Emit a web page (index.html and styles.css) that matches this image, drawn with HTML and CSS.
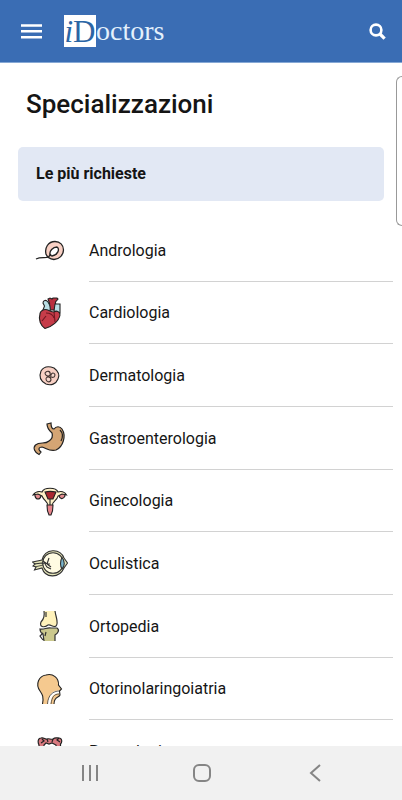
FILE: index.html
```html
<!DOCTYPE html>
<html lang="it">

<head>
  <meta charset="UTF-8" />
  <meta name="viewport" content="width=device-width, initial-scale=1.0" />
  <title>iDoctors - Specializzazioni</title>
  <link rel="stylesheet" href="styles.css">
</head>

<body>
  <header class="topbar">
    <button class="icon-btn" aria-label="Menu">
      <svg width="21" height="15" viewBox="0 0 21 15" fill="#fff">
        <path d="M0 0.3h21v2.4H0zM0 6.1h21v2.4H0zM0 12h21v2.4H0z" />
      </svg>
    </button>
    <a class="logo" href="#"><span class="logo-box"><i>i</i><span>D</span></span><span class="logo-rest">octors</span></a>
    <button class="icon-btn search" aria-label="Cerca">
      <svg width="17" height="17" viewBox="0 0 17 17" fill="none" stroke="#fff">
        <circle cx="7" cy="7" r="5.4" stroke-width="2.6" />
        <path d="M11 11l4.6 4.6" stroke-width="3.2" />
      </svg>
    </button>
  </header>

  <main>
    <h1>Specializzazioni</h1>
    <h2>Le più richieste</h2>

    <ul class="list">
      <li>
        <svg class="icon" viewBox="0 0 36 36" stroke="#222" stroke-width="1.3" fill="none">
          <path d="M23 8.500C28 8.500 31.500 12 31.500 17C31.500 22 27 26.500 22 26.500C18 26 15 24 14 21C12.500 15 16 8.500 23 8.500Z" fill="#f8d0c4" />
          <path d="M18 22C17 18 21 14 25 14C28 16 26 22 20 23Z" fill="#fff" />
          <path d="M19 21L16.500 24C13 25.500 9 23.500 4 26" />
        </svg>
        <a href="#">Andrologia</a>
      </li>
      <li>
        <svg class="icon" viewBox="0 0 36 36" stroke="#222" stroke-width="1.1" fill="none">
          <path d="M18 15L17.500 8L16 4L18 3L20 4L21 3L25 3L26 4L23.500 7L24 15Z" fill="#b9303f" />
          <path d="M11 15L12.500 11L11 8C11 5 14 4.500 16 7C18 10 19 12 18 17L13 18ZM22 16L23 9H28V18Z" fill="#b9dfe5" />
          <path d="M11 15C15 13 18 17 22 17C25 15 28 17 28 20C27 26 20 32 13 33.500C9 31 6 25 8 19C8 17 9 16 11 15Z" fill="#c63c49" />
          <path d="M14 18C18 18 21 20 22 23M10 26L14 21M22 17L23 27" stroke="#6f1721" />
        </svg>
        <a href="#">Cardiologia</a>
      </li>
      <li>
        <svg class="icon" viewBox="0 0 36 36" stroke="#222" stroke-width="1.1" fill="none">
          <path d="M9 13C12 8 17 8 22 10C26 13 28 17 26 21C24 26 19 28 14 26C8 23 7 18 9 13Z" fill="#f8d0c4" />
          <g fill="#f6d8ce" stroke="#443532">
            <path d="M13 15C15 12 19 13 18 17C17 19 13 18 13 15ZM19 17C20 13 25 16 22 19C20 20 18 19 19 17ZM14 21C14 18 19 18 19 22C18 25 14 24 14 21Z" />
          </g>
        </svg>
        <a href="#">Dermatologia</a>
      </li>
      <li>
        <svg class="icon" viewBox="0 0 36 36" stroke="#222" stroke-width="1.2" fill="none">
          <path d="M15 3L19 2C19 5 20 8 22 8C24 5 28 5 30 8C34.500 15 31 26 24 29C18 31 14 27 10 26C7 26 6 28 8 30L9 31L7 33.500C3 32 0.500 27 3.500 24C8 20 13 24 17 20C20 18 21 15 20 12C16.500 9 15 7 15 3Z" fill="#d4a574" />
          <path d="M28 9C31 12 31 16 29 20" />
        </svg>
        <a href="#">Gastroenterologia</a>
      </li>
      <li>
        <svg class="icon" viewBox="0 0 36 36" stroke="#222" stroke-width="1.1" fill="none">
          <path d="M3 13C2 9 9 10 9 13C8 17 4 17 3 13ZM27 13C28 9 33 10 33 13C31 17 28 16 27 13Z" fill="#e68d91" />
          <path d="M1 12C4 8 7 8 10 9C12 4 24 4 26 9C29 8 32 8 34.500 12L30 11L26 13C25 18 20 18 20 23H16C16 18 12 18 10 13L6 11Z" fill="#fff1c8" />
          <path d="M13 9C17 8 19 8 24 9L21 16H16Z" fill="#a92831" />
          <path d="M18 16V22" />
          <path d="M15 22H21L20.500 28L19 32H17L15.500 28Z" fill="#e7848b" />
        </svg>
        <a href="#">Ginecologia</a>
      </li>
      <li>
        <svg class="icon" viewBox="0 0 36 36" stroke="#333" stroke-width="1.1" fill="none">
          <path d="M0.500 16L10 14C13 2 28 2 32 12L35.500 17L32 22C27 33 13 32 10 22L2.500 24L4 21L1 20L3 18Z" fill="#e5e5b9" />
          <circle cx="21" cy="17" r="10.300" fill="#fffbe2" />
          <path d="M2 18L10 17L18 18M11 15L15 18L19 21M15 18L17 12M13 18L15 21L19 23" />
          <path d="M3 21L11 19" stroke-width="0.800" />
          <path d="M30 11.500C33 15 33 20 30 23C28 20 28 15 30 11.500Z" fill="#77b3cc" />
        </svg>
        <a href="#">Oculistica</a>
      </li>
      <li>
        <svg class="icon" viewBox="0 0 36 36" stroke="#333" stroke-width="1.200" fill="none">
          <path d="M12 2C13 8 11 11 9 13C7 18 12 19 16 16C19 15 21 19 24 17C27 14 24 9 23 2" fill="#fff2bb" />
          <path d="M14 3V8" />
          <path d="M8 20C12 21 15 18 19 19L25 19C28 21 26 24 23 26V32H12L11 25C9 24 8 23 8 20Z" fill="#cbc88d" stroke="none" />
          <path d="M12 32L11 25C9 24 8 23 8 20C12 21 15 18 19 19L25 19C28 21 26 24 23 26V32M11 24L8 27L11 31M14 23L13 27" />
        </svg>
        <a href="#">Ortopedia</a>
      </li>
      <li>
        <svg class="icon" viewBox="0 0 36 36" stroke="#222" stroke-width="1.100" fill="none">
          <path d="M10.500 33C12 25 10 23 8 20C3 13 7 5 14 4C21 2 27 7 26.500 14L29.500 18L27.500 20L28 24C27 27 22 25 22 33Z" fill="#f5c98f" stroke="none" />
          <path d="M10.500 33C12 25 10 23 8 20C3 13 7 5 14 4C21 2 27 7 26.500 14L29.500 18L27.500 20L28 24C27 27 22 25 22 33" />
          <path d="M17 33C18 24 21 21 27 21" stroke="#fff" stroke-width="3" />
          <path d="M15.500 33C16 24 21 20 27.500 20M19 33C20 26 22 23 27 23" stroke-width="0.700" />
        </svg>
        <a href="#">Otorinolaringoiatria</a>
      </li>
      <li>
        <svg class="icon" viewBox="0 0 36 36" stroke="#222" stroke-width="1.200" fill="none">
          <path d="M7 30V11C5.500 8 6 4 9 4C12 3 13 6 15 5C17 4 19 6 21 5C23 3 25 4 27 4C30 4 30.500 8 28.500 10V30H24V11L20 9L17 10L14 9L12 11V30Z" fill="#d9797f" />
          <path d="M10 5L12 7L9 9M15 5L16 8M21 5L20 8M27 4L25 6L28 8" />
        </svg>
        <a href="#">Proctologia</a>
      </li>
    </ul>
  </main>

  <div class="edge-panel"></div>

  <nav class="navbar">
    <button aria-label="Recenti">
      <svg width="18" height="18" viewBox="0 0 18 18" stroke="#858585" stroke-width="2">
        <path d="M2 1v16M9 1v16M16 1v16" />
      </svg>
    </button>
    <button aria-label="Home">
      <svg width="18" height="18" viewBox="0 0 18 18" fill="none" stroke="#858585" stroke-width="2">
        <rect x="1" y="1" width="16" height="16" rx="5" />
      </svg>
    </button>
    <button aria-label="Indietro">
      <svg width="18" height="18" viewBox="0 0 18 18" fill="none" stroke="#858585" stroke-width="2">
        <path d="M14 1L5 9l9 8" />
      </svg>
    </button>
  </nav>
</body>

</html>
```
FILE: styles.css
```css
* {
  box-sizing: border-box;
}

body {
  display: flex;
  flex-direction: column;
  height: 100vh;
  margin: 0;
  overflow: hidden;
  font-family: Roboto, sans-serif;
  background-color: #fff;
  color: #151515;
}

button {
  display: flex;
  padding: 0;
  border: none;
  background: none;
  cursor: pointer;
}

a {
  color: inherit;
  text-decoration: none;
}

.topbar {
  display: flex;
  align-items: center;
  flex-shrink: 0;
  height: 63px;
  padding: 0 16px 0 21px;
  background-color: #3a6db4;
  border-bottom: 1px solid #86a8d5;
}

.logo {
  display: flex;
  align-items: center;
  margin-left: 22px;
  font-family: "Liberation Serif", serif;
  font-size: 28px;
  line-height: 36px;
  color: #e4f1fc;
}

.logo-box {
  display: flex;
  justify-content: center;
  width: 32px;
  height: 32px;
  background-color: #fff;
  color: #2b66a5;
  font-size: 31px;
  line-height: 34px;
}

.search {
  margin-left: auto;
}

main {
  flex: 1;
  min-height: 0;
  overflow-y: auto;
  scrollbar-width: none;
}

h1 {
  margin: 24px 26px 26px;
  font-size: 26px;
  font-weight: 500;
  line-height: 34px;
}

h2 {
  margin: 0 18px 18px;
  padding: 17px 18px;
  border-radius: 5px;
  background-color: #e2e8f4;
  font-size: 16px;
  font-weight: 700;
  line-height: 20px;
}

.list {
  display: grid;
  grid-auto-rows: 63px 62px 63px;
  margin: 0;
  padding: 0 9px 0 32px;
  list-style: none;
}

.list li {
  display: flex;
  align-items: center;
  gap: 21px;
}

.icon {
  flex-shrink: 0;
  width: 36px;
  height: 36px;
}

.list a {
  display: flex;
  align-items: center;
  flex: 1;
  height: 100%;
  border-bottom: 1px solid #d2d2d2;
  font-size: 16px;
}

/* handle of the side panel, mostly off screen */
.edge-panel {
  position: absolute;
  top: 76px;
  right: 0;
  width: 6px;
  height: 150px;
  border: 1px solid #999;
  border-right: none;
  border-radius: 6px 0 0 6px;
  background-color: #fff;
}

.navbar {
  display: flex;
  justify-content: space-around;
  align-items: center;
  flex-shrink: 0;
  height: 54px;
  padding: 0 31px 0 34px;
  background-color: #f1f1f1;
}
```
